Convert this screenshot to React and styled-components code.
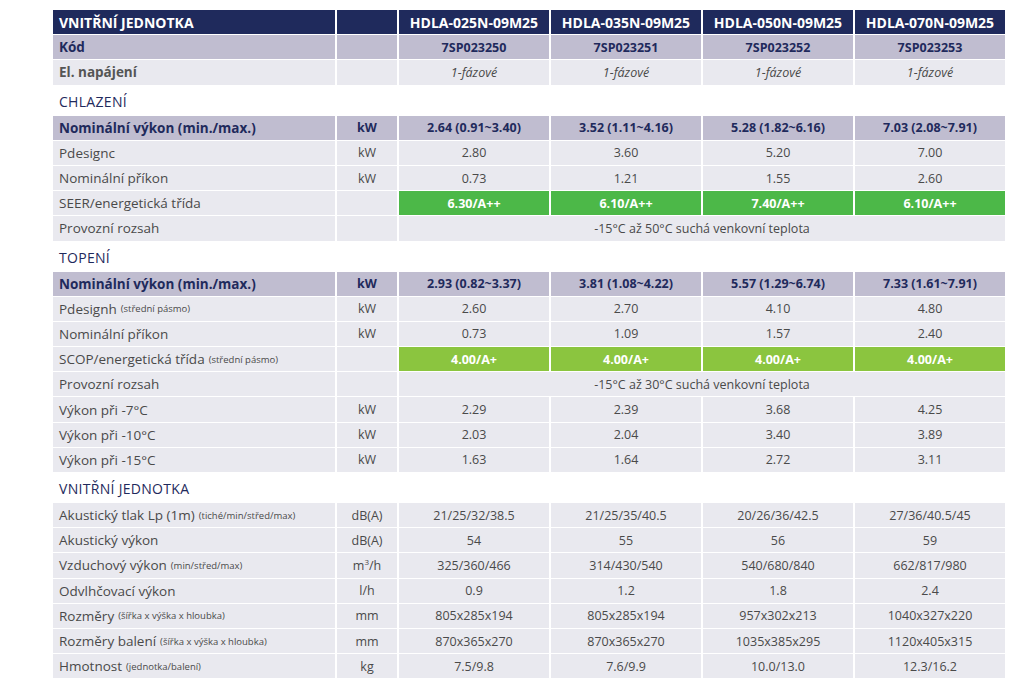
import React from 'react';
import styled, { createGlobalStyle } from 'styled-components';

const Global = createGlobalStyle`
  body { margin: 0; background: #fff; font-family: "Open Sans", "Noto Sans", sans-serif; }
`;

const Page = styled.div`
  padding: 10px 0 0 53px;
`;

const Grid = styled.div`
  display: grid;
  grid-template-columns: 282px 60px 150px 150px 150px 150px;
  column-gap: 2px;
  row-gap: 1px;
  width: 952px;
`;

const bgs = {
  head: '#1f2a5c',
  sub: '#c0bdd0',
  row: '#e9e9ef',
  green: '#4cb848',
  lime: '#8bc53f',
};

const Cell = styled.div`
  height: 24.2px;
  display: flex;
  align-items: center;
  justify-content: ${p => (p.$left ? 'flex-start' : 'center')};
  padding: ${p => (p.$left ? '0 0 0 6px' : '0')};
  background: ${p => bgs[p.$kind]};
  color: ${p => (p.$kind === 'head' || p.$kind === 'green' || p.$kind === 'lime' ? '#fff' : p.$kind === 'sub' ? '#1f2a5c' : '#4a4a4a')};
  font-size: ${p => (p.$left ? '13.5px' : '12.5px')};
  font-weight: ${p => (p.$kind === 'row' ? 400 : 700)};
  font-style: ${p => (p.$italic ? 'italic' : 'normal')};
  grid-column: ${p => (p.$span ? `span ${p.$span}` : 'auto')};
  white-space: nowrap;
  ${p => p.$kind === 'head' && 'font-size: 14px;'}
`;

const Small = styled.span`
  font-size: 9.5px;
  margin-left: 4px;
`;

const Section = styled.div`
  grid-column: 1 / -1;
  height: 25px;
  display: flex;
  align-items: flex-end;
  padding: 0 0 4px 6px;
  color: #1f2a5c;
  font-size: 14px;
  letter-spacing: 0.3px;
`;

const Row = ({ kind = 'row', label, small, unit = '', vals, span, valKind, italic }) => (
  <>
    <Cell $kind={kind} $left>{label}{small && <Small>{small}</Small>}</Cell>
    <Cell $kind={kind}>{unit}</Cell>
    {span ? (
      <Cell $kind={kind} $span={4}>{span}</Cell>
    ) : (
      vals.map((v, i) => <Cell key={i} $kind={valKind || kind} $italic={italic}>{v}</Cell>)
    )}
  </>
);

export default function App() {
  return (
    <Page>
      <Global />
      <Grid>
        <Row kind="head" label="VNITŘNÍ JEDNOTKA" vals={['HDLA-025N-09M25', 'HDLA-035N-09M25', 'HDLA-050N-09M25', 'HDLA-070N-09M25']} />
        <Row kind="sub" label="Kód" vals={['7SP023250', '7SP023251', '7SP023252', '7SP023253']} />
        <Row label={<b style={{ color: '#555' }}>El. napájení</b>} vals={['1-fázové', '1-fázové', '1-fázové', '1-fázové']} italic />

        <Section>CHLAZENÍ</Section>
        <Row kind="sub" label="Nominální výkon (min./max.)" unit="kW" vals={['2.64 (0.91~3.40)', '3.52 (1.11~4.16)', '5.28 (1.82~6.16)', '7.03 (2.08~7.91)']} />
        <Row label="Pdesignc" unit="kW" vals={['2.80', '3.60', '5.20', '7.00']} />
        <Row label="Nominální příkon" unit="kW" vals={['0.73', '1.21', '1.55', '2.60']} />
        <Row label="SEER/energetická třída" valKind="green" vals={['6.30/A++', '6.10/A++', '7.40/A++', '6.10/A++']} />
        <Row label="Provozní rozsah" span="-15°C až 50°C suchá venkovní teplota" />

        <Section>TOPENÍ</Section>
        <Row kind="sub" label="Nominální výkon (min./max.)" unit="kW" vals={['2.93 (0.82~3.37)', '3.81 (1.08~4.22)', '5.57 (1.29~6.74)', '7.33 (1.61~7.91)']} />
        <Row label="Pdesignh" small="(střední pásmo)" unit="kW" vals={['2.60', '2.70', '4.10', '4.80']} />
        <Row label="Nominální příkon" unit="kW" vals={['0.73', '1.09', '1.57', '2.40']} />
        <Row label="SCOP/energetická třída" small="(střední pásmo)" valKind="lime" vals={['4.00/A+', '4.00/A+', '4.00/A+', '4.00/A+']} />
        <Row label="Provozní rozsah" span="-15°C až 30°C suchá venkovní teplota" />
        <Row label="Výkon při -7°C" unit="kW" vals={['2.29', '2.39', '3.68', '4.25']} />
        <Row label="Výkon při -10°C" unit="kW" vals={['2.03', '2.04', '3.40', '3.89']} />
        <Row label="Výkon při -15°C" unit="kW" vals={['1.63', '1.64', '2.72', '3.11']} />

        <Section>VNITŘNÍ JEDNOTKA</Section>
        <Row label="Akustický tlak Lp (1m)" small="(tiché/min/střed/max)" unit="dB(A)" vals={['21/25/32/38.5', '21/25/35/40.5', '20/26/36/42.5', '27/36/40.5/45']} />
        <Row label="Akustický výkon" unit="dB(A)" vals={['54', '55', '56', '59']} />
        <Row label="Vzduchový výkon" small="(min/střed/max)" unit={<span>m<sup style={{ fontSize: 8 }}>3</sup>/h</span>} vals={['325/360/466', '314/430/540', '540/680/840', '662/817/980']} />
        <Row label="Odvlhčovací výkon" unit="l/h" vals={['0.9', '1.2', '1.8', '2.4']} />
        <Row label="Rozměry" small="(šířka x výška x hloubka)" unit="mm" vals={['805x285x194', '805x285x194', '957x302x213', '1040x327x220']} />
        <Row label="Rozměry balení" small="(šířka x výška x hloubka)" unit="mm" vals={['870x365x270', '870x365x270', '1035x385x295', '1120x405x315']} />
        <Row label="Hmotnost" small="(jednotka/balení)" unit="kg" vals={['7.5/9.8', '7.6/9.9', '10.0/13.0', '12.3/16.2']} />
      </Grid>
    </Page>
  );
}
